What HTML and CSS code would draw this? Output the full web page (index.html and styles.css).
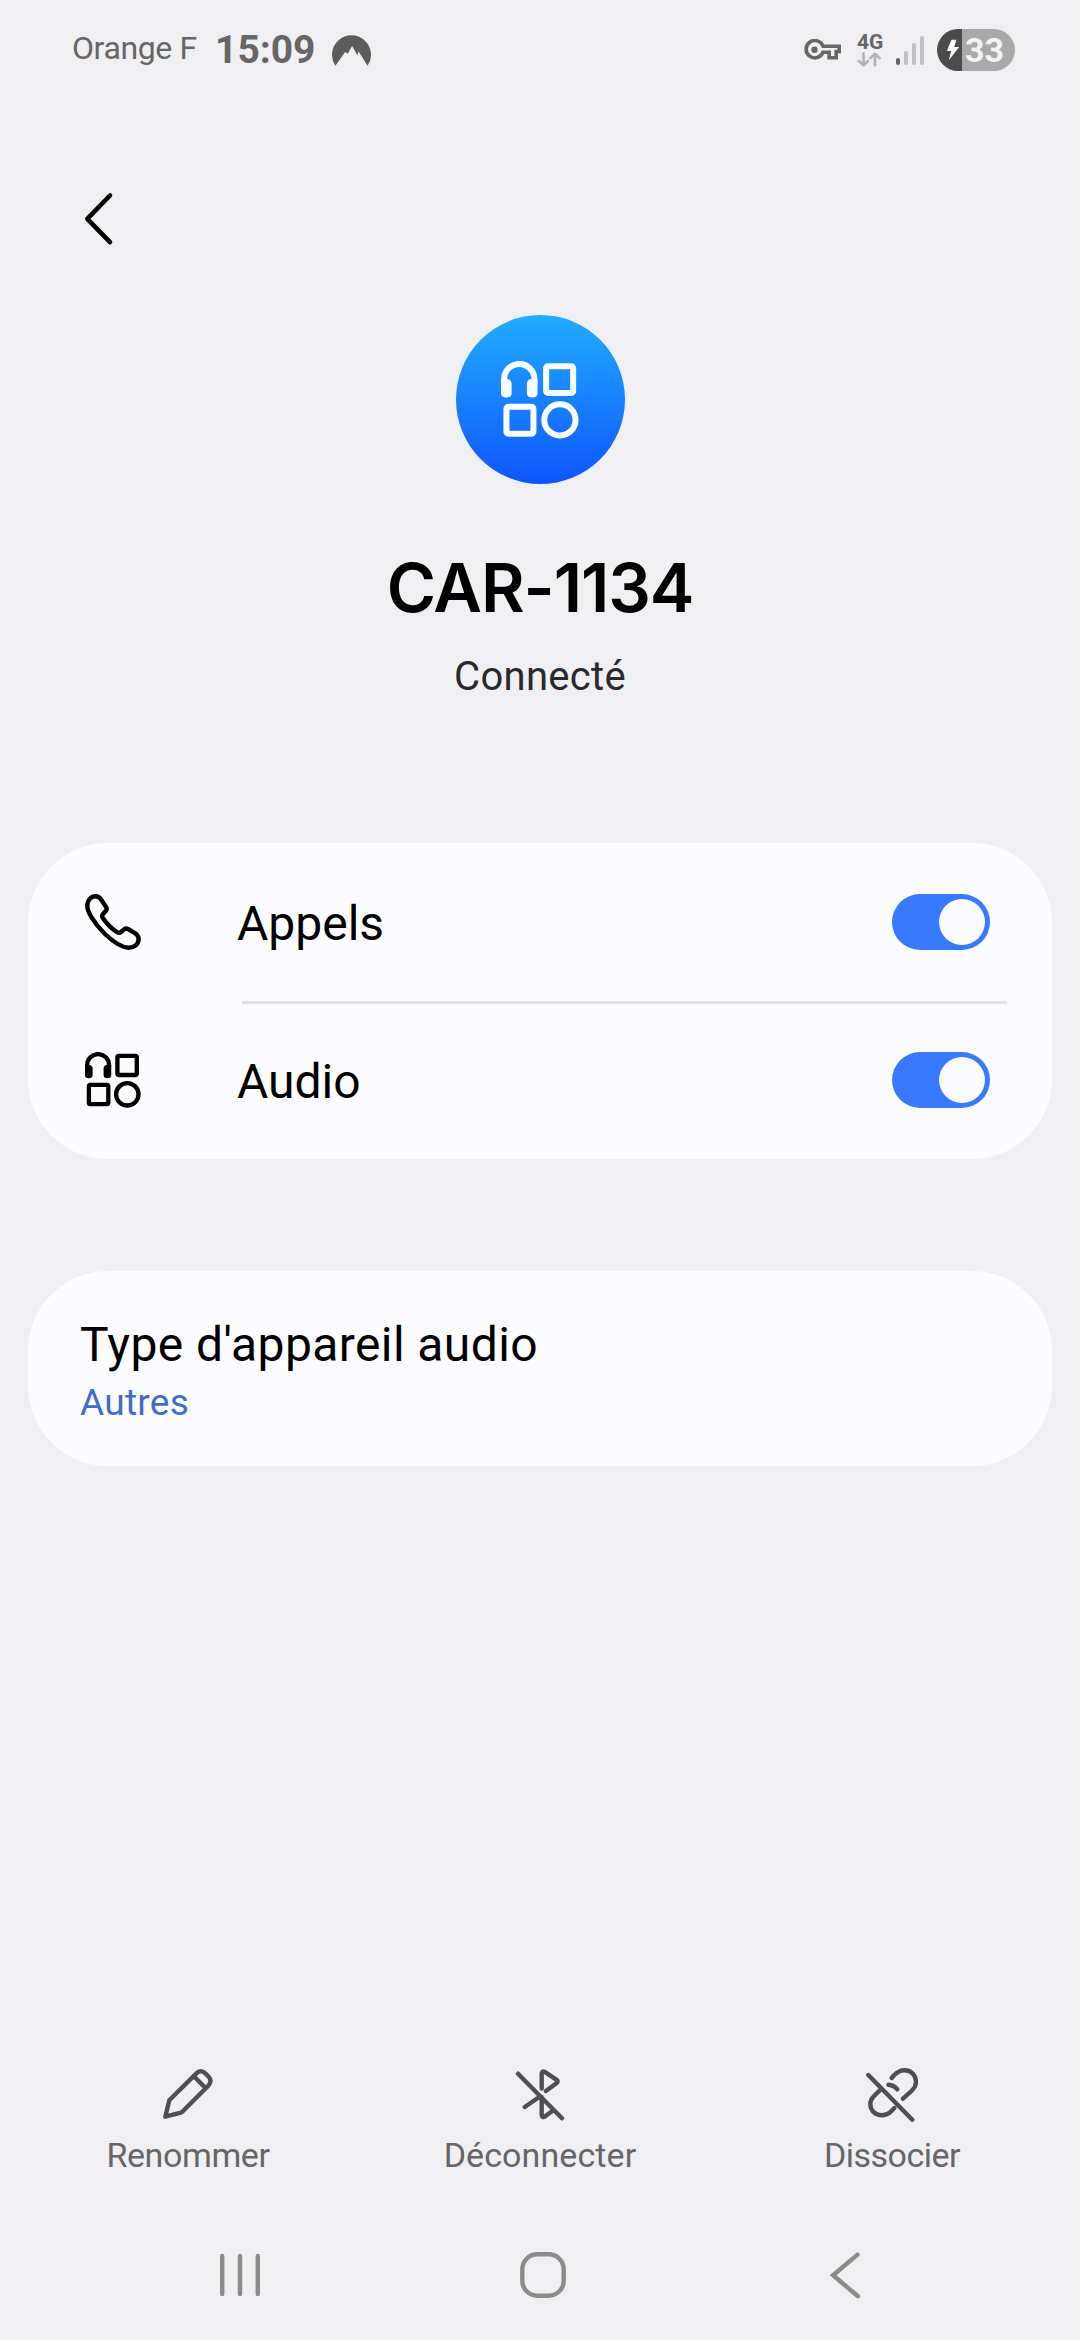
FILE: index.html
```html
<!DOCTYPE html>
<html lang="fr">
<head>
    <meta charset="UTF-8">
    <meta name="viewport" content="width=device-width, initial-scale=1.0">
    <title>CAR-1134</title>
    <link rel="stylesheet" href="styles.css">
</head>
<body>
    <!-- Shared icon, used in the header and in the Audio row -->
    <svg class="sprite">
        <symbol id="audio-icon" viewBox="0 0 56 56">
            <g fill="none" stroke="currentColor" stroke-width="4.3">
                <path d="M2.2 16v-3a10.9 10.9 0 0 1 21.8 0v3"/>
                <rect x="32.4" y="3.8" width="19.4" height="19.2" rx="1.4"/>
                <rect x="3.9" y="32.8" width="19.4" height="19.4" rx="1.4"/>
                <circle cx="42.3" cy="42.3" r="11.2"/>
            </g>
            <path fill="currentColor" d="M0 13h4q3.6 0 3.6 3.5v6.8q0 2.9-3.8 2.9T0 23.3zM26.2 13h-4q-3.6 0-3.6 3.5v6.8q0 2.9 3.8 2.9t3.8-2.9z"/>
        </symbol>
    </svg>

    <div class="status-bar">
        <span class="carrier">Orange F</span>
        <span class="clock">15:09</span>
        <svg class="vpn-icon" viewBox="0 0 39 31">
            <path d="M3.4 30.8A19.5 19.5 0 1 1 35.6 30.8L26.4 16.3 25.5 20.5 20.1 11 15.8 18.8 13.2 16.9Z"/>
        </svg>
        <div class="status-right">
            <svg class="key-icon" viewBox="0 0 38 22">
                <path fill="none" stroke="#666" stroke-width="3.6" d="M19 7.2H35.2V12.5H32.2V18.7H25.2V13.2H19A8.7 8.7 0 1 1 19 7.2Z"/>
                <circle cx="10.5" cy="10.8" r="3.2" fill="#666"/>
            </svg>
            <div class="network">
                <span>4G</span>
                <svg viewBox="0 0 24 15">
                    <path fill="none" stroke="#b3b3b5" stroke-width="2.6" stroke-linecap="round" stroke-linejoin="round" d="M6.5 1.3V13.3M1.8 9 6.5 13.3 11 9M18 13.3V1.8M13.5 6 18 1.8 22.5 6"/>
                </svg>
            </div>
            <div class="signal">
                <i></i><i></i><i></i><i></i>
            </div>
            <div class="battery">
                <svg viewBox="0 0 14 22">
                    <path fill="#fff" d="M5.5.8H10.5L8.2 8H13.3L2.8 21.2 5.2 12H.8Z"/>
                </svg>
                <span>33</span>
            </div>
        </div>
    </div>

    <div class="toolbar">
        <svg viewBox="0 0 30 54">
            <path d="M26 3.5 3.3 26.8 26 50.2"/>
        </svg>
    </div>

    <div class="device">
        <div class="device-icon">
            <svg><use href="#audio-icon"/></svg>
        </div>
        <h1>CAR-1134</h1>
        <p>Connecté</p>
    </div>

    <div class="card">
        <div class="row">
            <svg class="row-icon" viewBox="0 0 56 56">
                <path fill="none" stroke="#000" stroke-width="4.4" stroke-linejoin="round" d="M2.3 12C2.4 6 6 2.3 10.5 2.3 13.3 2.3 15.2 3.8 16.8 6.5L21.2 13.2C22 14.5 21.9 15.5 21 16.8L17.8 20.3C16.8 21.6 17 22.8 17.8 24 21.5 29.5 26.5 34.5 32 38.2 33.4 39 34.8 39 36 38L39 35.4C40.3 34.3 41.5 34.2 43 35L49.5 38.8C52.5 40.5 53.8 42.5 53.6 45.5 53.3 50.5 49 53.8 43.5 53.7 38 53.5 30 49.5 20 40 9 29 2.3 18 2.3 12Z"/>
            </svg>
            <span class="row-label">Appels</span>
            <span class="switch"></span>
        </div>
        <div class="row">
            <svg class="row-icon"><use href="#audio-icon"/></svg>
            <span class="row-label">Audio</span>
            <span class="switch"></span>
        </div>
    </div>

    <div class="card type-card">
        <div class="type-title">Type d'appareil audio</div>
        <div class="type-value">Autres</div>
    </div>

    <div class="actions">
        <div class="action">
            <svg viewBox="0 0 52 54">
                <path d="M3.3 48.7 7.3 32.3 34.2 5.6C37 2.6 40.5 2.6 43.3 5.3L46.5 8.5C49.2 11.3 49.2 14.8 46.3 17.7L19.8 44.3ZM32 8.5 43.3 19.8"/>
            </svg>
            <span class="label-rename">Renommer</span>
        </div>
        <div class="action">
            <svg viewBox="-2 -1 52 54">
                <path d="M2 4.7 46 49.3M25.7 19.5V4.8Q26 1.2 29.2 3.2L40.6 10.8Q42.6 12.4 40.8 14L29.8 22M25.7 28V45.8Q26 49.4 29.2 47.3L37 41.5M23.3 28 8.7 38"/>
            </svg>
            <span class="label-disconnect">Déconnecter</span>
        </div>
        <div class="action">
            <svg viewBox="0 0 52 54">
                <path d="M2.3 7 46.3 51.7M25.7 10 28 7.3C31.5 3.7 35 2.2 38.5 2.2 45.5 2.2 50 7.5 50 14 50 17.5 48.7 20 46 22.5L37 30.7M14.3 21.7 8 28C5.3 30.8 4.3 33.3 4.3 36 4.3 42.5 9.5 47.3 16 47.3 19.5 47.3 22.5 46 25 43.5L28.3 40M22.5 16.8Q28 17.3 31.3 21.3"/>
            </svg>
            <span class="label-unpair">Dissocier</span>
        </div>
    </div>

    <div class="nav-bar">
        <svg viewBox="0 0 50 50"><path d="M7.2 6V44M25 6V44M42.8 6V44"/></svg>
        <svg viewBox="0 0 50 50"><rect x="4.3" y="4.3" width="41.4" height="41.4" rx="15"/></svg>
        <svg viewBox="0 0 50 50"><path d="M37.5 4.6 13 25.3 38 46.2"/></svg>
    </div>
</body>
</html>
```
FILE: styles.css
```css
* {
    box-sizing: border-box;
}

body {
    margin: 0;
    height: 2340px;
    display: flex;
    flex-direction: column;
    background-color: #f0f0f3;
    color: #000;
    font-family: Roboto, "Liberation Sans", sans-serif;
}

svg {
    display: block;
    flex-shrink: 0;
}

.sprite {
    position: absolute;
    width: 0;
    height: 0;
}

/* Status bar */
.status-bar {
    display: flex;
    align-items: center;
    height: 100px;
    padding: 0 65px 0 72px;
    color: #666;
    white-space: nowrap;
}

.carrier {
    width: 143px;
    font-size: 32px;
    letter-spacing: -0.4px;
    line-height: 40px;
    margin-top: -4px;
}

.clock {
    width: 117px;
    font-size: 39px;
    font-weight: 700;
    line-height: 40px;
}

.vpn-icon {
    width: 39px;
    height: 31px;
    fill: #5c5c5d;
}

.status-right {
    display: flex;
    align-items: center;
    margin-left: auto;
}

.key-icon {
    width: 38px;
    height: 22px;
    margin-right: 15px;
}

.network {
    width: 26px;
    height: 34px;
    margin-right: 13px;
    font-size: 21px;
    font-weight: 700;
    line-height: 18px;
}

.network span {
    display: block;
}

.network svg {
    width: 24px;
    height: 15px;
    margin-top: 1px;
}

.signal {
    display: flex;
    align-items: flex-end;
    gap: 4px;
    width: 41px;
    height: 30px;
}

.signal i {
    width: 4px;
    height: 7px;
    border-radius: 2px;
    background: #666;
}

.signal i:nth-child(2) {
    height: 14px;
}

.signal i:nth-child(3) {
    height: 22px;
}

.signal i:nth-child(4) {
    height: 29px;
}

.signal i:not(:first-child) {
    background: #bfbfc1;
}

.battery {
    display: flex;
    align-items: center;
    width: 78px;
    height: 42px;
    padding-left: 9px;
    border-radius: 21px;
    background: linear-gradient(to right, #4b4b4c 25px, #a9a9aa 25px);
    color: #f3f3f4;
    font-size: 34px;
    font-weight: 700;
}

.battery svg {
    width: 14px;
    height: 22px;
    margin-right: 5px;
}

/* Header */
.toolbar {
    height: 215px;
    padding: 92px 0 0 84px;
}

.toolbar svg {
    width: 30px;
    height: 54px;
    fill: none;
    stroke: #000;
    stroke-width: 4.6;
    stroke-linecap: round;
    stroke-linejoin: round;
}

.device {
    display: flex;
    flex-direction: column;
    align-items: center;
    height: 528px;
}

.device-icon {
    display: flex;
    align-items: center;
    justify-content: center;
    width: 169px;
    height: 169px;
    border-radius: 50%;
    background: linear-gradient(#20adff, #1055ff);
    color: #fafdff;
}

.device-icon svg {
    width: 78px;
    height: 78px;
}

.device h1 {
    margin: 64px 0 0;
    font-family: Inter, sans-serif;
    font-size: 67px;
    font-weight: 600;
    letter-spacing: -1.1px;
    line-height: 80px;
}

.device p {
    margin: 25px 0 0;
    color: #29292c;
    font-size: 40px;
    letter-spacing: 0.3px;
    line-height: 48px;
}

/* Cards */
.card {
    margin: 0 28px;
    border-radius: 80px;
    background: #fcfcff;
}

.row {
    position: relative;
    display: flex;
    align-items: center;
    height: 158px;
    padding: 0 62px 0 57px;
}

.row + .row::before {
    content: "";
    position: absolute;
    top: 0;
    left: 214px;
    right: 45px;
    height: 3px;
    background: #e2e2e5;
}

.row-icon {
    width: 56px;
    height: 56px;
}

.row-label {
    flex: 1;
    margin-left: 96px;
    padding-top: 2px;
    font-size: 48px;
}

.switch {
    width: 98px;
    height: 56px;
    padding: 5px 5px 0 47px;
    border-radius: 28px;
    background: #387aff;
}

.switch::after {
    content: "";
    display: block;
    width: 46px;
    height: 46px;
    border-radius: 50%;
    background: #fcfcff;
}

.type-card {
    height: 195px;
    margin-top: 112px;
    padding: 44px 52px 0;
}

.type-title {
    font-size: 48px;
    letter-spacing: 0.4px;
    line-height: 60px;
}

.type-value {
    color: #416dc7;
    font-size: 37px;
    letter-spacing: 0.3px;
    line-height: 56px;
}

/* Bottom actions */
.actions {
    display: flex;
    justify-content: space-between;
    margin-top: auto;
    padding: 0 12px;
}

.action {
    display: flex;
    flex-direction: column;
    align-items: center;
    width: 352px;
    height: 136px;
    color: #666668;
    font-size: 34px;
    line-height: 44px;
}

.action svg {
    width: 52px;
    height: 54px;
    margin-bottom: 11px;
    fill: none;
    stroke: #4f4f51;
    stroke-width: 4.4;
    stroke-linecap: round;
    stroke-linejoin: round;
}

.label-rename {
    letter-spacing: -0.4px;
}

.label-disconnect {
    letter-spacing: 0.1px;
}

.label-unpair {
    letter-spacing: -0.5px;
}

.nav-bar {
    display: flex;
    justify-content: space-between;
    height: 136px;
    padding: 46px 210px 0 215px;
}

.nav-bar svg {
    width: 50px;
    height: 50px;
    fill: none;
    stroke: #8b8b8c;
    stroke-width: 4.4;
    stroke-linecap: round;
}
```
